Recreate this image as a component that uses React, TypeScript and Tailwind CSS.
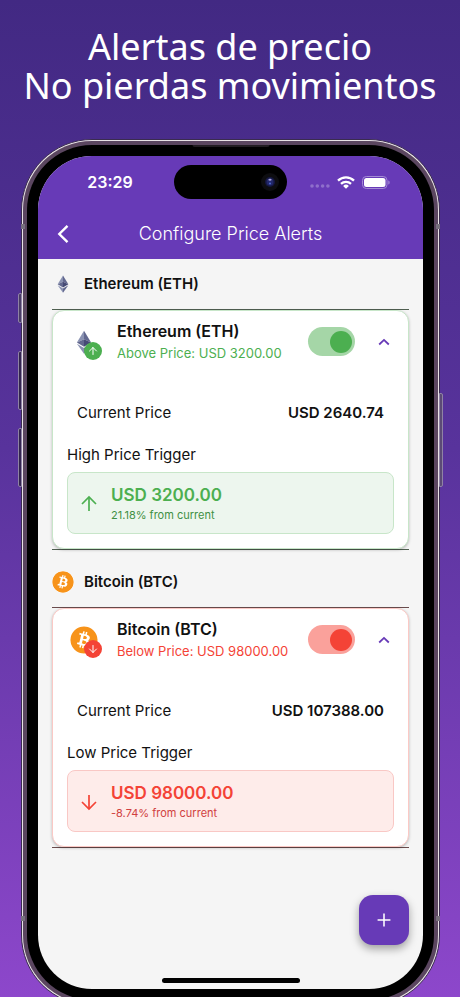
import { ArrowDown, ArrowUp, Plus } from 'lucide-react'
import { FaBitcoin } from 'react-icons/fa6'

type Coin = 'eth' | 'btc'

type Alert = {
    coin: Coin
    name: string
    direction: 'up' | 'down'
    summary: string
    current: string
    triggerLabel: string
    trigger: string
    distance: string
}

const alerts: Alert[] = [
    {
        coin: 'eth',
        name: 'Ethereum (ETH)',
        direction: 'up',
        summary: 'Above Price: USD 3200.00',
        current: 'USD 2640.74',
        triggerLabel: 'High Price Trigger',
        trigger: 'USD 3200.00',
        distance: '21.18% from current',
    },
    {
        coin: 'btc',
        name: 'Bitcoin (BTC)',
        direction: 'down',
        summary: 'Below Price: USD 98000.00',
        current: 'USD 107388.00',
        triggerLabel: 'Low Price Trigger',
        trigger: 'USD 98000.00',
        distance: '-8.74% from current',
    },
]

const tones = {
    up: {
        card: 'border-[#c8e6c9]',
        line: 'border-[#4f5f50]',
        summary: 'text-[#4caf50]',
        badge: 'bg-[#4caf50]',
        toggle: 'bg-[#a5d6a7] before:bg-[#4caf50]',
        box: 'bg-[#edf6ee] border-[#c8e6c9]',
        distance: 'text-[#3f9044]',
    },
    down: {
        card: 'border-[#fbc9c5]',
        line: 'border-[#6a4c4d]',
        summary: 'text-[#f44336]',
        badge: 'bg-[#f44336]',
        toggle: 'bg-[#faa19b] before:bg-[#f44336]',
        box: 'bg-[#feecea] border-[#f9c8c5]',
        distance: 'text-[#d04040]',
    },
}

function EthereumIcon({ className }: { className: string }) {
    return (
        <svg viewBox="0 0 32 32" className={className} aria-hidden="true">
            <path d="M16 1 6.5 16.5 16 12.2z" fill="#8a92b2" />
            <path d="M16 1v11.2l9.5 4.3z" fill="#62688f" />
            <path d="M6.5 16.5 16 22.2v-10z" fill="#62688f" />
            <path d="M16 12.2v10l9.5-5.7z" fill="#454a75" />
            <path d="M6.5 18.4 16 31.5v-7.4z" fill="#8a92b2" />
            <path d="M16 24.1v7.4l9.5-13.1z" fill="#62688f" />
        </svg>
    )
}

function CoinIcon({ coin, large = false }: { coin: Coin; large?: boolean }) {
    const size = large ? 'size-7' : 'size-[22px]'
    return (
        <span className={`flex items-center justify-center ${size}`}>
            {coin === 'btc' ? (
                <FaBitcoin className={`${size} rounded-full bg-white text-[#f7931a]`} aria-hidden="true" />
            ) : (
                <EthereumIcon className={large ? 'size-6' : 'size-[18px]'} />
            )}
        </span>
    )
}

function StatusBar() {
    return (
        <div className="grid grid-cols-[1fr_113px_1fr] items-center pt-[9px]">
            <span className="pl-2 text-center text-base font-semibold">23:29</span>
            <div className="flex h-[34px] items-center justify-end rounded-full bg-black pr-2">
                <svg viewBox="0 0 18 18" className="size-[18px]" aria-hidden="true">
                    <circle cx="9" cy="9" r="9" fill="#0d0d10" />
                    <circle cx="9" cy="9" r="5" fill="#15173f" />
                    <circle cx="9" cy="9" r="3.5" fill="#22286c" />
                    <ellipse cx="9" cy="6.7" rx="1.6" ry="1" fill="#a8a0d8" />
                    <circle cx="9" cy="10.5" r="1.1" fill="#4a62c8" />
                </svg>
            </div>
            <div className="flex items-center justify-end gap-[7px] pr-[33px]">
                <svg viewBox="0 0 20 14" className="h-[14px] w-5" fill="#8f6fcb" aria-hidden="true">
                    <circle cx="2" cy="11" r="1.8" />
                    <circle cx="7.3" cy="11" r="1.8" />
                    <circle cx="12.6" cy="11" r="1.8" />
                    <circle cx="17.9" cy="11" r="1.8" />
                </svg>
                <svg viewBox="0 0 18 13" className="h-[13px] w-[18px]" aria-hidden="true">
                    <g fill="none" stroke="#fff" strokeWidth="2.3">
                        <path d="M1 4.7a11.5 11.5 0 0 1 16 0" />
                        <path d="M4 7.8a7.2 7.2 0 0 1 10 0" />
                    </g>
                    <path d="M9 12.8 6.1 9.9a4.2 4.2 0 0 1 5.8 0z" fill="#fff" />
                </svg>
                <svg viewBox="0 0 28 13" className="h-[13px] w-7" aria-hidden="true">
                    <rect x="0.5" y="0.5" width="24.5" height="12" rx="3.8" fill="none" stroke="#a58bd6" />
                    <rect x="2" y="2" width="21.5" height="9" rx="2.5" fill="#fff" />
                    <path d="M26.3 4.5c1.8.6 1.8 3.4 0 4z" fill="#a58bd6" />
                </svg>
            </div>
        </div>
    )
}

function AlertCard({ alert }: { alert: Alert }) {
    const tone = tones[alert.direction]
    const Arrow = alert.direction === 'up' ? ArrowUp : ArrowDown

    return (
        <section className="mb-[7px]">
            <h2 className="flex h-[50px] items-center gap-[10px] text-[15px] font-semibold">
                <CoinIcon coin={alert.coin} />
                {alert.name}
            </h2>
            <div className={`border-y ${tone.line}`}>
                <article className={`rounded-xl border bg-white px-[14px] pt-[10px] pb-[14px] shadow-[0_1px_3px_rgba(0,0,0,0.25)] ${tone.card}`}>
                    <div className="flex items-center pl-[3px]">
                        <div className="relative">
                            <CoinIcon coin={alert.coin} large />
                            <span className={`absolute -right-1 -bottom-1 flex size-[18px] items-center justify-center rounded-full text-white ${tone.badge}`}>
                                <Arrow size={12} strokeWidth={2} />
                            </span>
                        </div>
                        <div className="ml-[19px] flex-1 whitespace-nowrap">
                            <h3 className="text-base leading-5 font-semibold">{alert.name}</h3>
                            <p className={`mt-[3px] text-[13px] leading-[18px] ${tone.summary}`}>{alert.summary}</p>
                        </div>
                        <input
                            type="checkbox"
                            role="switch"
                            defaultChecked
                            aria-label={`${alert.name} alert`}
                            className={`flex h-[29px] w-[47px] appearance-none items-center rounded-full px-[3px] before:size-[22px] before:rounded-full checked:justify-end ${tone.toggle}`}
                        />
                        <button type="button" aria-label="Collapse" className="ml-[19px] flex size-5 items-center justify-center text-[#673ab7]">
                            <svg viewBox="0 0 12 8" className="h-2 w-3" fill="none" stroke="currentColor" strokeWidth="1.8">
                                <path d="M1.2 6.5 6 1.9l4.8 4.6" />
                            </svg>
                        </button>
                    </div>
                    <div className="mt-[41px] flex justify-between px-[10px] text-[15px] leading-5">
                        <span>Current Price</span>
                        <span className="font-semibold">{alert.current}</span>
                    </div>
                    <p className="mt-[22px] text-[15px] leading-5">{alert.triggerLabel}</p>
                    <div className={`mt-[7px] flex h-[62px] items-center gap-[10px] rounded-lg border px-[9px] pt-[2px] ${tone.box}`}>
                        <Arrow size={24} strokeWidth={1.7} strokeLinecap="butt" strokeLinejoin="miter" className={tone.summary} />
                        <div>
                            <p className={`text-[17px] leading-[22px] font-semibold ${tone.summary}`}>{alert.trigger}</p>
                            <p className={`text-[11px] leading-[18px] ${tone.distance}`}>{alert.distance}</p>
                        </div>
                    </div>
                </article>
            </div>
        </section>
    )
}

function Phone({ children }: { children: React.ReactNode }) {
    return (
        <div className="relative mt-[34px] mr-5 ml-[21px] shrink-0 rounded-[71px] border border-[#3a2c50] bg-[#e9e3e6] p-px">
            {/* side keys */}
            <span className="absolute top-[153px] -left-1 h-[30px] w-1 rounded-l-xs border border-[#8f82a5] bg-[#4a3c66]" />
            <span className="absolute top-[211px] -left-1 h-[59px] w-1 rounded-l-xs border border-[#8f82a5] bg-[#33244f]" />
            <span className="absolute top-[288px] -left-1 h-[59px] w-1 rounded-l-xs border border-[#8f82a5] bg-[#33244f]" />
            <span className="absolute top-[253px] -right-1 h-[94px] w-1 rounded-r-xs border border-[#8f82a5] bg-[#5c4a76]" />
            {/* antenna bands */}
            <span className="absolute top-[84px] -left-px h-[5px] w-1 bg-[#77707d]" />
            <span className="absolute top-[84px] -right-px h-[5px] w-1 bg-[#77707d]" />
            <span className="absolute bottom-[84px] -left-px h-[5px] w-1 bg-[#77707d]" />
            <span className="absolute -right-px bottom-[84px] h-[5px] w-1 bg-[#77707d]" />
            <div className="rounded-[69px] bg-[#5b4660] p-1">
                <div className="relative rounded-[65px] bg-black p-[11px]">
                    <span className="absolute top-0 left-1/2 h-[2px] w-[77px] -translate-x-1/2 rounded-b-full bg-[#221d22]" />
                    {children}
                </div>
            </div>
        </div>
    )
}

export default function App() {
    return (
        <main className="flex h-screen flex-col overflow-hidden bg-linear-to-b from-[#422983] via-[#58339c] via-45% to-[#8d47cb] font-['Inter',sans-serif] text-[#111]">
            <h1 className="mt-[27px] text-center font-['Noto_Sans',sans-serif] text-[36px] leading-[39px] whitespace-nowrap text-white">
                Alertas de precio
                <br />
                No pierdas movimientos
            </h1>
            <Phone>
                <div className="overflow-hidden rounded-[54px] bg-[#f5f5f5]">
                    <header className="bg-[#673ab7] text-white">
                        <StatusBar />
                        <div className="mt-[10px] grid h-[50px] grid-cols-[50px_1fr_50px] items-center">
                            <button type="button" aria-label="Back" className="flex h-10 items-center justify-center">
                                <svg viewBox="0 0 12 20" className="h-5 w-3" fill="none" stroke="currentColor" strokeWidth="2.4">
                                    <path d="M10.5 1.8 2.3 10l8.2 8.2" />
                                </svg>
                            </button>
                            <p className="text-center text-lg font-light">Configure Price Alerts</p>
                        </div>
                    </header>
                    <div className="px-[14px]">
                        {alerts.map((alert) => (
                            <AlertCard key={alert.coin} alert={alert} />
                        ))}
                        <button
                            type="button"
                            aria-label="Add alert"
                            className="mt-[47px] ml-auto flex size-[50px] items-center justify-center rounded-[14px] bg-[#673ab7] text-white shadow-[0_4px_8px_rgba(0,0,0,0.35)]"
                        >
                            <Plus size={22} strokeWidth={1.7} strokeLinecap="butt" />
                        </button>
                    </div>
                    <div className="mx-auto mt-[33px] mb-[6px] h-[5px] w-[138px] rounded-full bg-black" />
                </div>
            </Phone>
        </main>
    )
}
